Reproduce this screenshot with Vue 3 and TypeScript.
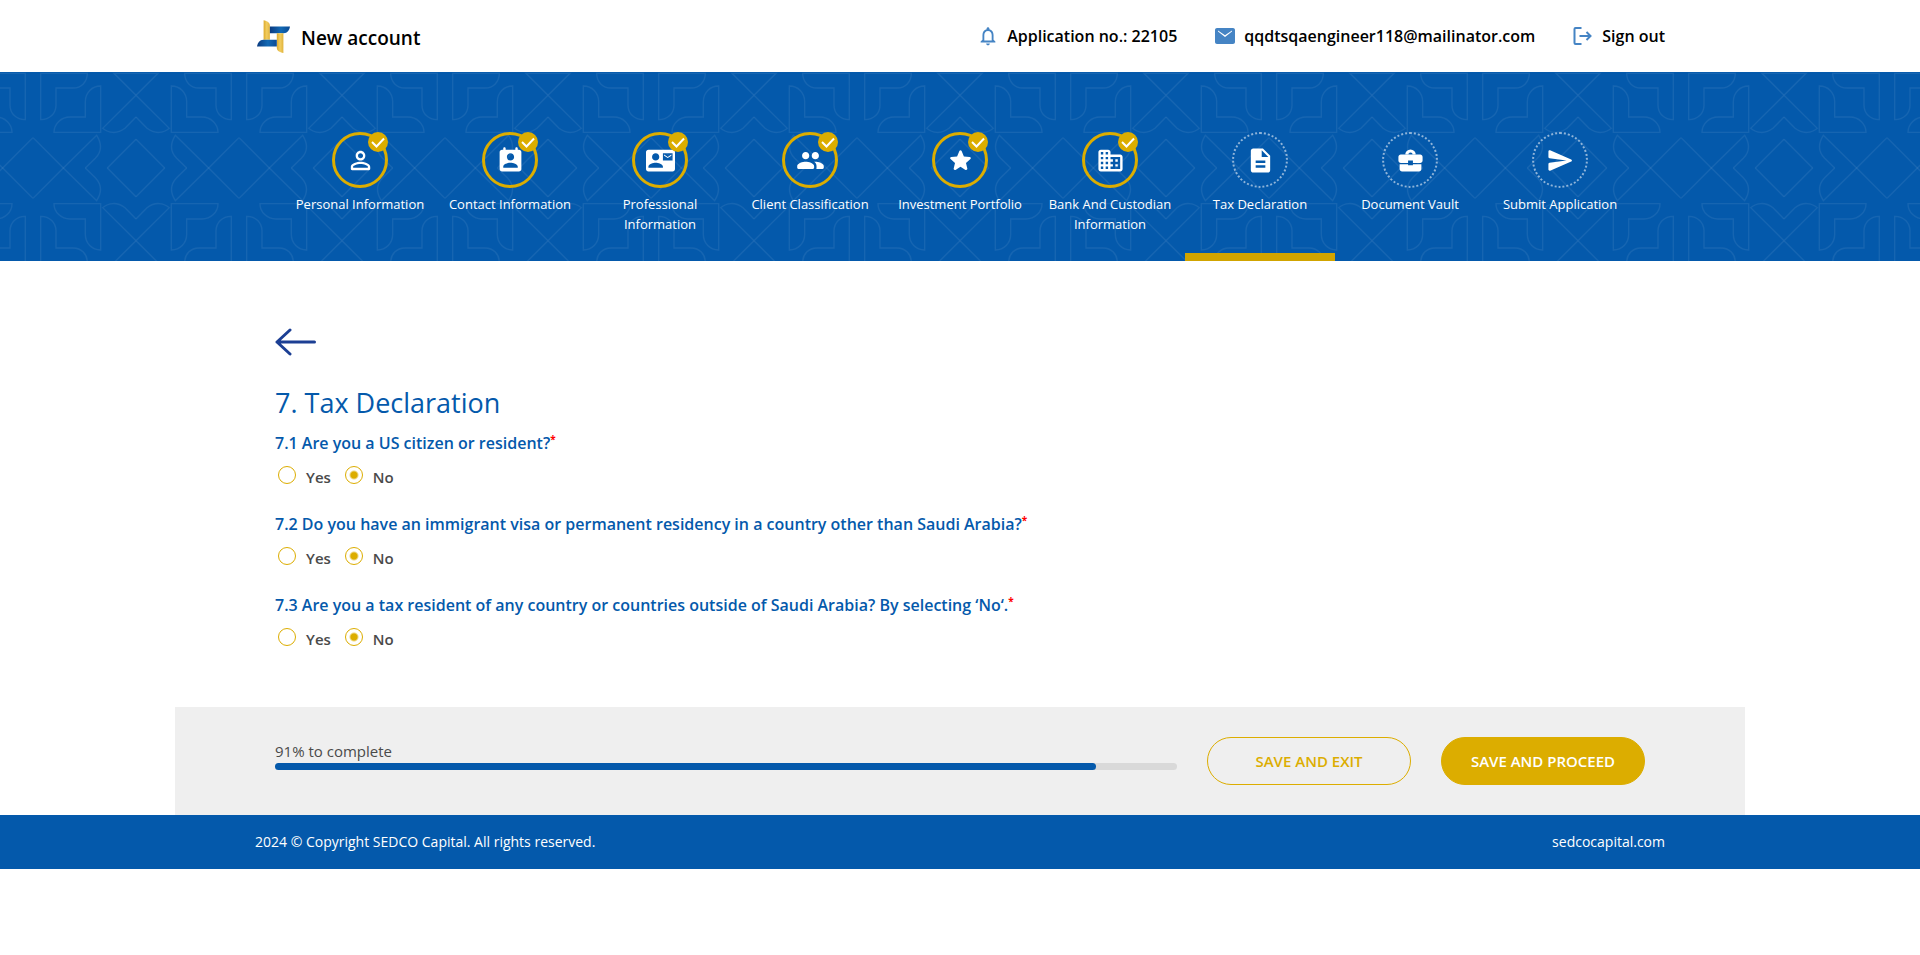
<script setup lang="ts">
import { reactive } from 'vue'

interface Step {
  label: string
  icon: string
  size: number
  done: boolean
  active?: boolean
}

interface Question {
  id: string
  text: string
}

const steps: Step[] = [
  {
    label: 'Personal Information',
    size: 29,
    done: true,
    icon: 'M12 5.9c1.16 0 2.1.94 2.1 2.1s-.94 2.1-2.1 2.1S9.9 9.16 9.9 8s.94-2.1 2.1-2.1m0 9c2.97 0 6.1 1.46 6.1 2.1v1.1H5.9V17c0-.64 3.13-2.1 6.1-2.1M12 4C9.79 4 8 5.79 8 8s1.79 4 4 4 4-1.79 4-4-1.79-4-4-4zm0 9c-2.67 0-8 1.34-8 4v2c0 .55.45 1 1 1h14c.55 0 1-.45 1-1v-2c0-2.66-5.33-4-8-4z',
  },
  {
    label: 'Contact Information',
    size: 29,
    done: true,
    icon: 'M19 3h-1V2c0-.55-.45-1-1-1s-1 .45-1 1v1H8V2c0-.55-.45-1-1-1s-1 .45-1 1v1H5c-1.11 0-2 .9-2 2v14c0 1.1.89 2 2 2h14c1.1 0 2-.9 2-2V5c0-1.1-.9-2-2-2zm-7 3c1.66 0 3 1.34 3 3s-1.34 3-3 3-3-1.34-3-3 1.34-3 3-3zm6 12H6v-1c0-2 4-3.1 6-3.1s6 1.1 6 3.1v1z',
  },
  {
    label: 'Professional Information',
    size: 29,
    done: true,
    icon: 'M21 8V7l-3 2-3-2v1l3 2 3-2zm1-5H2C.9 3 0 3.9 0 5v14c0 1.1.9 2 2 2h20c1.1 0 1.99-.9 1.99-2L24 5c0-1.1-.9-2-2-2zM8 6c1.66 0 3 1.34 3 3s-1.34 3-3 3-3-1.34-3-3 1.34-3 3-3zm6 12H2v-1c0-2 4-3.1 6-3.1s6 1.1 6 3.1v1zm8-6h-8V6h8v6z',
  },
  {
    label: 'Client Classification',
    size: 29,
    done: true,
    icon: 'M16 11c1.66 0 2.99-1.34 2.99-3S17.66 5 16 5c-1.66 0-3 1.34-3 3s1.34 3 3 3zm-8 0c1.66 0 2.99-1.34 2.99-3S9.66 5 8 5C6.34 5 5 6.34 5 8s1.34 3 3 3zm0 2c-2.33 0-7 1.17-7 3.5V18c0 .55.45 1 1 1h12c.55 0 1-.45 1-1v-1.5c0-2.33-4.67-3.5-7-3.5zm8 0c-.29 0-.62.02-.97.05 1.16.84 1.97 1.97 1.97 3.45V18c0 .35-.07.69-.18 1H22c.55 0 1-.45 1-1v-1.5c0-2.33-4.67-3.5-7-3.5z',
  },
  {
    label: 'Investment Portfolio',
    size: 29,
    done: true,
    icon: 'M12 17.27l4.15 2.51c.76.46 1.69-.22 1.49-1.08l-1.1-4.72 3.67-3.18c.67-.58.31-1.68-.57-1.75l-4.83-.41-1.89-4.46c-.34-.81-1.5-.81-1.84 0L9.19 8.63l-4.83.41c-.88.07-1.24 1.17-.57 1.75l3.67 3.18-1.1 4.72c-.2.86.73 1.54 1.49 1.08l4.15-2.5z',
  },
  {
    label: 'Bank And Custodian Information',
    size: 29,
    done: true,
    icon: 'M12 7V5c0-1.1-.9-2-2-2H4c-1.1 0-2 .9-2 2v14c0 1.1.9 2 2 2h16c1.1 0 2-.9 2-2V9c0-1.1-.9-2-2-2h-8zM6 19H4v-2h2v2zm0-4H4v-2h2v2zm0-4H4V9h2v2zm0-4H4V5h2v2zm4 12H8v-2h2v2zm0-4H8v-2h2v2zm0-4H8V9h2v2zm0-4H8V5h2v2zm10 12h-8v-2h2v-2h-2v-2h2v-2h-2V9h8v10zm-2-8h-2v2h2v-2zm0 4h-2v2h2v-2z',
  },
  {
    label: 'Tax Declaration',
    size: 29,
    done: false,
    active: true,
    icon: 'M14 2H6c-1.1 0-2 .9-2 2v16c0 1.1.9 2 2 2h12c1.1 0 2-.9 2-2V8l-6-6zm2 16H8v-2h8v2zm0-4H8v-2h8v2zm-3-5V3.5L18.5 9H13z',
  },
  {
    label: 'Document Vault',
    size: 29,
    done: false,
    icon: 'M10 16v-1H3v4c0 1.11.89 2 2 2h14c1.11 0 2-.89 2-2v-4h-7v1h-4zM20 7H4c-1.1 0-2 .9-2 2v3c0 1.11.89 2 2 2h6v-2h4v2h6c1.1 0 2-.9 2-2V9c0-1.1-.9-2-2-2zM7.6 7.2a4.4 4.4 0 0 1 8.8 0h-2.6a1.8 1.8 0 0 0-3.6 0z',
  },
  {
    label: 'Submit Application',
    size: 29,
    done: false,
    icon: 'M3.4 20.4l17.45-7.48c.81-.35.81-1.49 0-1.84L3.4 3.6c-.66-.29-1.39.2-1.39.91L2 9.12c0 .5.37.93.87.99L17 12 2.87 13.88c-.5.08-.87.51-.87 1.01l.01 4.61c0 .71.73 1.2 1.39.9z',
  },
]

const questions: Question[] = [
  { id: 'q1', text: '7.1 Are you a US citizen or resident?' },
  { id: 'q2', text: '7.2 Do you have an immigrant visa or permanent residency in a country other than Saudi Arabia?' },
  { id: 'q3', text: '7.3 Are you a tax resident of any country or countries outside of Saudi Arabia? By selecting ‘No‘.' },
]

const options = ['Yes', 'No']
const answers = reactive<Record<string, string>>({ q1: 'No', q2: 'No', q3: 'No' })
const progress = 91
</script>

<template>
  <div class="page">
    <header class="header">
      <div class="brand">
        <svg class="logo" viewBox="50 57 100 100" aria-hidden="true">
          <defs>
            <linearGradient id="gold" x1="0" y1="0" x2="1" y2="0">
              <stop offset="0" stop-color="#dcaa2c" />
              <stop offset="0.5" stop-color="#f2cd60" />
              <stop offset="1" stop-color="#e0b33c" />
            </linearGradient>
            <linearGradient id="blue" x1="0" y1="0" x2="1" y2="0">
              <stop offset="0" stop-color="#0a3a80" />
              <stop offset="0.55" stop-color="#1269b4" />
              <stop offset="1" stop-color="#0b4a94" />
            </linearGradient>
          </defs>
          <path d="M70 58C81 60 89 65 89 74V117H70z" fill="url(#gold)" />
          <path d="M89 77H150C148 89 142 97 131 97H89z" fill="url(#blue)" />
          <path d="M110 97H130V157C118 155 110 150 110 141z" fill="url(#gold)" />
          <path d="M50 137C52 125 58 118 69 117H110V137z" fill="url(#blue)" />
        </svg>
        <span class="brand-name">New account</span>
      </div>
      <div class="account">
        <span class="account-item">
          <svg viewBox="-1 -1 26 26" aria-hidden="true">
            <path d="M12 22c1.1 0 2-.9 2-2h-4c0 1.1.9 2 2 2zm6-6v-5c0-3.07-1.63-5.64-4.5-6.32V4c0-.83-.67-1.5-1.5-1.5s-1.5.67-1.5 1.5v.68C7.64 5.36 6 7.92 6 11v5l-2 2v1h16v-1l-2-2zm-2 1H8v-6c0-2.48 1.51-4.5 4-4.5s4 2.02 4 4.5v6z" />
          </svg>
          Application no.: 22105
        </span>
        <span class="account-item">
          <svg viewBox="0 0 24 24" aria-hidden="true">
            <path d="M20 4H4c-1.1 0-2 .9-2 2v12c0 1.1.9 2 2 2h16c1.1 0 2-.9 2-2V6c0-1.1-.9-2-2-2zm-1 3.6L12 13 5 7.6V6.4l7 4.8 7-4.8z" />
          </svg>
          qqdtsqaengineer118@mailinator.com
        </span>
        <a class="account-item" href="#">
          <svg viewBox="0 0 24 24" aria-hidden="true">
            <path d="M10.500 4H4.500a1 1 0 0 0-1 1V19a1 1 0 0 0 1 1H10.500M8.500 12H19.500M15.500 8l4 4-4 4" fill="none" stroke="#4584c4" stroke-width="2" />
          </svg>
          Sign out
        </a>
      </div>
    </header>

    <nav class="banner" aria-label="Application steps">
      <svg class="lattice" aria-hidden="true">
        <defs>
          <g id="quarter">
            <path d="M23 4H163C163 30 145 48 120 48H69V99C69 125 50 143 23 143Z" />
            <path d="M203 181V42C177 42 157 62 157 89V135H111C85 135 63 155 63 181Z" />
            <path d="M309 135L276 169C252 187 227 184 209 169L309 70M309 70L243 4H309" />
            <path d="M0 197L91 288L191 190C207 215 207 238 187 259L157 288" />
            <path d="M309 202L223 288" />
          </g>
          <g id="half">
            <use href="#quarter" />
            <use href="#quarter" transform="translate(0 576) scale(1 -1)" />
          </g>
          <pattern id="tile" patternUnits="userSpaceOnUse" x="-103" y="0" width="206" height="189" viewBox="0 0 618 567">
            <g fill="none" stroke="#ffffff" stroke-opacity="0.07" stroke-width="4">
              <use href="#half" />
              <use href="#half" transform="translate(618 0) scale(-1 1)" />
            </g>
          </pattern>
        </defs>
        <svg x="50%" overflow="visible">
          <rect x="-4120" width="8240" height="189" fill="url(#tile)" />
        </svg>
      </svg>
      <ol class="steps">
        <li v-for="step in steps" :key="step.label" class="step" :class="{ done: step.done, active: step.active }">
          <span class="ring">
            <svg :width="step.size" :height="step.size" viewBox="0 0 24 24" aria-hidden="true">
              <path :d="step.icon" fill="#ffffff" fill-rule="evenodd" />
            </svg>
            <svg v-if="step.done" class="tick" viewBox="0 0 20 20" aria-hidden="true">
              <circle cx="10" cy="10" r="10" fill="#dcad00" />
              <path d="M4 10l4.500 4.500L16 6.500" fill="none" stroke="#ffffff" stroke-width="2" />
            </svg>
          </span>
          <span class="step-label">{{ step.label }}</span>
        </li>
      </ol>
    </nav>

    <main class="content">
      <button class="back" type="button" aria-label="Back">
        <svg width="42" height="28" viewBox="0 0 42 28" aria-hidden="true">
          <path d="M15 2L2 14L15 26M2 14H39.500" fill="none" stroke="#1c3f94" stroke-width="3" stroke-linecap="round" stroke-linejoin="round" />
        </svg>
      </button>
      <h1>7. Tax Declaration</h1>
      <fieldset v-for="question in questions" :key="question.id" class="question">
        <legend>{{ question.text }}<sup>*</sup></legend>
        <div class="options">
          <label v-for="option in options" :key="option" class="option">
            <input v-model="answers[question.id]" type="radio" :name="question.id" :value="option" />
            <span>{{ option }}</span>
          </label>
        </div>
      </fieldset>
    </main>

    <section class="actions">
      <div class="progress">
        <span>{{ progress }}% to complete</span>
        <div class="track">
          <div class="fill" :style="{ width: progress + '%' }"></div>
        </div>
      </div>
      <button class="action outline" type="button">SAVE AND EXIT</button>
      <button class="action solid" type="button">SAVE AND PROCEED</button>
    </section>

    <footer class="footer">
      <div class="footer-inner">
        <span>2024 © Copyright SEDCO Capital. All rights reserved.</span>
        <a href="#">sedcocapital.com</a>
      </div>
    </footer>
  </div>
</template>

<style>
body {
  margin: 0;
  background: #ffffff;
}
</style>

<style scoped>
.page {
  font-family: "Segoe UI", "Open Sans", "Noto Sans", sans-serif;
  color: #000000;
}

a {
  color: inherit;
  text-decoration: none;
}

.header {
  box-sizing: border-box;
  max-width: 1410px;
  height: 72px;
  margin: 0 auto;
  display: flex;
  align-items: center;
  justify-content: space-between;
}

.brand,
.account,
.account-item {
  display: flex;
  align-items: center;
}

.brand {
  gap: 11px;
  padding-left: 2px;
}

.logo {
  width: 33px;
  height: 33px;
}

.brand-name {
  font-size: 19px;
  font-weight: 600;
  line-height: 28px;
  padding-top: 4px;
}

.account {
  gap: 36px;
}

.account-item {
  gap: 7px;
  font-size: 16px;
  font-weight: 600;
  line-height: 24px;
}

.account-item svg {
  width: 24px;
  height: 24px;
  fill: #4584c4;
}

.banner {
  position: relative;
  overflow: hidden;
  background: #0459ab;
}

.lattice {
  position: absolute;
  inset: 0;
  width: 100%;
  height: 100%;
}

.steps {
  position: relative;
  display: grid;
  grid-template-columns: repeat(9, 1fr);
  max-width: 1350px;
  margin: 0 auto;
  padding: 0;
  list-style: none;
}

.step {
  box-sizing: border-box;
  display: flex;
  flex-direction: column;
  align-items: center;
  gap: 6px;
  min-height: 189px;
  padding: 60px 8px 19px;
  border-bottom: 8px solid transparent;
}

.step.active {
  border-bottom-color: #d1a400;
}

.ring {
  box-sizing: border-box;
  position: relative;
  display: flex;
  align-items: center;
  justify-content: center;
  width: 56px;
  height: 56px;
  border: 2px dotted #8fb4d9;
  border-radius: 50%;
}

.done .ring {
  border: 3px solid #dcad00;
}

.tick {
  position: absolute;
  top: -3px;
  right: -3px;
  width: 20px;
  height: 20px;
}

.step-label {
  font-size: 13px;
  line-height: 20px;
  color: #ffffff;
  text-align: center;
}

.content {
  max-width: 1370px;
  margin: 0 auto;
  padding: 67px 0 33px;
}

.back {
  display: block;
  padding: 0;
  border: 0;
  background: none;
  cursor: pointer;
}

.back svg {
  display: block;
}

h1 {
  margin: 27px 0 8px;
  font-size: 27px;
  font-weight: 400;
  line-height: 40px;
  color: #0459ab;
}

.question {
  margin: 0;
  padding: 0;
  border: 0;
  height: 81px;
}

legend {
  padding: 0;
  font-size: 16px;
  font-weight: 600;
  line-height: 24px;
  color: #0459ab;
}

sup {
  font-size: 10px;
  font-weight: 700;
  line-height: 0;
  color: #ff0000;
}

.options {
  display: flex;
  gap: 14px;
  padding: 11px 0 0 3px;
}

.option {
  display: flex;
  gap: 10px;
  font-size: 15px;
  font-weight: 600;
  line-height: 22px;
  color: #4a4a4a;
}

.option input {
  appearance: none;
  box-sizing: border-box;
  width: 18px;
  height: 18px;
  margin: 0;
  border: 1px solid #dcad00;
  border-radius: 50%;
}

.option input:checked {
  background: radial-gradient(circle, #dcad00 3px, transparent 5px);
}

.actions {
  box-sizing: border-box;
  display: flex;
  align-items: center;
  gap: 30px;
  max-width: 1570px;
  min-height: 108px;
  margin: 0 auto;
  padding: 30px 100px;
  background: #efefef;
}

.progress {
  flex: 1;
  padding-bottom: 14px;
  font-size: 15px;
  line-height: 24px;
  color: #4a4a4a;
}

.track {
  height: 7px;
  border-radius: 4px;
  background: #d9d9d9;
}

.fill {
  height: 7px;
  border-radius: 4px;
  background: #0459ab;
}

.action {
  box-sizing: border-box;
  min-width: 204px;
  height: 48px;
  padding: 0 24px;
  border: 1px solid #dcad00;
  border-radius: 24px;
  font-family: inherit;
  font-size: 15px;
  font-weight: 600;
  cursor: pointer;
}

.outline {
  background: transparent;
  color: #dcad00;
}

.solid {
  background: #dcad00;
  color: #ffffff;
}

.footer {
  background: #0459ab;
  color: #ffffff;
}

.footer-inner {
  display: flex;
  justify-content: space-between;
  max-width: 1410px;
  margin: 0 auto;
  padding: 15px 0;
  font-size: 14px;
  line-height: 24px;
}
</style>
